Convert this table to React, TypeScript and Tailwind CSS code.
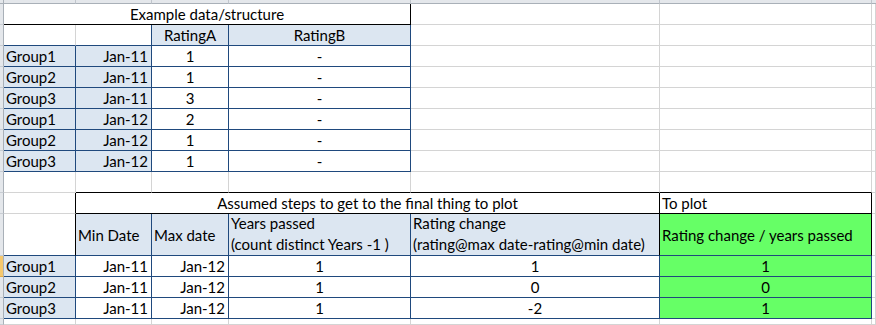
import React from "react";

// border colour keys: g = gridline, k = black, u = dark blue
const R: Record<string, string> = {
  g: "border-r-[#d4d4d4]",
  k: "border-r-black",
  u: "border-r-[#1f497d]",
  n: "border-r-transparent",
};
const B: Record<string, string> = {
  g: "border-b-[#d4d4d4]",
  k: "border-b-black",
  u: "border-b-[#1f497d]",
};

const SPAN: Record<number, string> = { 1: "", 4: "col-span-4" };

const BG: Record<string, string> = {
  w: "bg-white",
  b: "bg-[#dce6f1]",
  x: "bg-[#66ff66]",
};

const AL: Record<string, string> = {
  l: "justify-start pl-[2px]",
  r: "justify-end pr-[3px]",
  c: "justify-center",
};

type C = { t?: string; s?: number; r?: string; b?: string; bg?: string; a?: string; mid?: boolean };

function Cell({ t = "", s = 1, r = "g", b = "g", bg = "w", a = "l", mid }: C) {
  return (
    <div
      className={`flex border-r border-b ${R[r]} ${B[b]} ${BG[bg]} ${AL[a]} ${SPAN[s]} ${
        mid ? "items-center" : "items-end pb-[1px]"
      } overflow-visible whitespace-nowrap leading-[18px]`}
    >
      {t}
    </div>
  );
}

function Wrap({ l1, l2, r = "u" }: { l1: string; l2: string; r?: string }) {
  return (
    <div className={`flex flex-col justify-end border-r border-b ${R[r]} ${B.u} bg-[#dce6f1] pl-[2px] leading-[21px] whitespace-nowrap`}>
      <span>{l1}</span>
      <span>{l2}</span>
    </div>
  );
}

function Strip({ sel }: { sel?: boolean }) {
  return (
    <div
      className={`border-r border-b border-r-[#a9b0b8] ${
        sel ? "bg-[#f6c86d] border-b-[#e0a94a]" : "bg-[#e4e7eb] border-b-[#c8cdd3]"
      }`}
    />
  );
}

const top = [
  ["Group1", "Jan-11", "1"],
  ["Group2", "Jan-11", "1"],
  ["Group3", "Jan-11", "3"],
  ["Group1", "Jan-12", "2"],
  ["Group2", "Jan-12", "1"],
  ["Group3", "Jan-12", "1"],
];

const bottom = [
  ["Group1", "Jan-11", "Jan-12", "1", "1", "1"],
  ["Group2", "Jan-11", "Jan-12", "1", "0", "0"],
  ["Group3", "Jan-11", "Jan-12", "1", "-2", "1"],
];

export default function App() {
  return (
    <div
      className="grid h-[325px] w-[876px] overflow-hidden bg-white text-[15px] text-black grid-cols-[4px_72px_76px_77px_182px_249px_212px_1fr] grid-rows-[4px_repeat(10,21px)_42px_repeat(3,21px)_1fr]"
      style={{ fontFamily: "Lato, 'Open Sans', sans-serif" }}
    >
      {/* column header strip */}
      <div className="border-r border-b border-r-[#a9b0b8] border-b-[#a9b0b8] bg-[#e4e7eb]" />
      {[0, 1, 2, 3, 4, 5].map((i) => (
        <div key={i} className="border-r border-b border-r-[#c0c5cc] border-b-[#a9b0b8] bg-[#e4e7eb]" />
      ))}
      <div className="border-b border-b-[#a9b0b8] bg-[#e4e7eb]" />

      {/* row 1 */}
      <Strip />
      <Cell t="Example data/structure" s={4} r="k" b="k" a="c" />
      <Cell />
      <Cell />
      <Cell />

      {/* row 2 */}
      <Strip />
      <Cell b="u" />
      <Cell r="u" b="u" />
      <Cell t="RatingA" r="u" b="u" bg="b" a="c" />
      <Cell t="RatingB" r="u" b="u" bg="b" a="c" />
      <Cell />
      <Cell />
      <Cell />

      {/* rows 3-8 */}
      {top.map(([g, d, n], i) => (
        <React.Fragment key={i}>
          <Strip />
          <Cell t={g} r="u" b="u" bg="b" />
          <Cell t={d} r="u" b="u" bg="b" a="r" />
          <Cell t={n} r="u" b="u" a="c" />
          <Cell t="-" r="u" b="u" a="c" />
          <Cell />
          <Cell />
          <Cell />
        </React.Fragment>
      ))}

      {/* row 9 */}
      <Strip />
      <Cell />
      <Cell b="k" />
      <Cell b="k" />
      <Cell b="k" />
      <Cell b="k" />
      <Cell b="k" />
      <Cell />

      {/* row 10 */}
      <Strip />
      <Cell r="k" />
      <Cell t="Assumed steps to get to the final thing to plot" s={4} r="k" b="k" a="c" />
      <Cell t="To plot" r="k" b="k" />
      <Cell />

      {/* row 11 */}
      <Strip />
      <Cell r="k" b="u" />
      <Cell t="Min Date" r="u" b="u" bg="b" mid />
      <Cell t="Max date" r="u" b="u" bg="b" mid />
      <Wrap l1="Years passed" l2="(count distinct Years -1 )" />
      <Wrap l1="Rating change" l2="(rating@max date-rating@min date)" r="k" />
      <Cell t="Rating change / years passed" r="k" b="u" bg="x" mid />
      <Cell />

      {/* rows 12-14 */}
      {bottom.map(([g, a, b, y, c, p], i) => (
        <React.Fragment key={i}>
          <Strip sel={i === 0} />
          <Cell t={g} r="u" b="u" bg="b" />
          <Cell t={a} r="u" b="u" a="r" />
          <Cell t={b} r="u" b="u" a="r" />
          <Cell t={y} r="u" b="u" a="c" />
          <Cell t={c} r="u" b="u" a="c" />
          <Cell t={p} r="u" b="u" bg="x" a="c" />
          <Cell />
        </React.Fragment>
      ))}

      {/* row 15 */}
      <Strip />
      <Cell />
      <Cell />
      <Cell />
      <Cell />
      <Cell />
      <Cell />
      <Cell />
    </div>
  );
}
